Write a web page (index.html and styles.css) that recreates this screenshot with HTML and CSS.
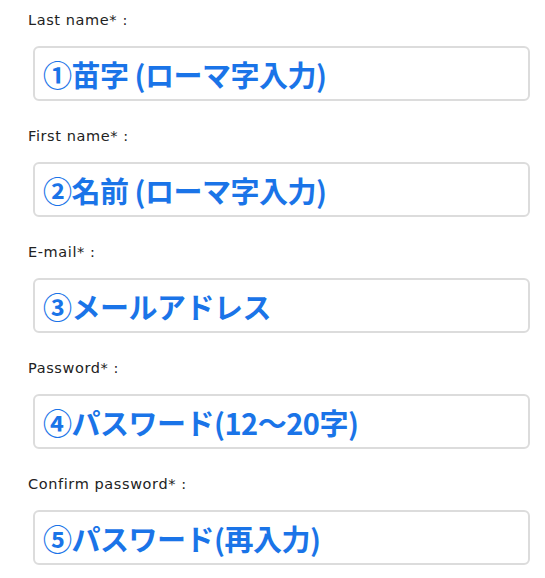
FILE: index.html
```html
<!doctype html>
<html>
	<head>
		<meta charset="utf-8" />
		<title>Register</title>
		<link rel="stylesheet" href="styles.css">
	</head>
	<body>
		<form class="signup">
			<div class="row">
				<label class="lbl">Last name* :</label>
				<div class="field">①苗字 (ローマ字入力)</div>
			</div>
			<div class="row">
				<label class="lbl">First name* :</label>
				<div class="field">②名前 (ローマ字入力)</div>
			</div>
			<div class="row">
				<label class="lbl">E-mail* :</label>
				<div class="field">③メールアドレス</div>
			</div>
			<div class="row">
				<label class="lbl">Password* :</label>
				<div class="field">④パスワード(12〜20字)</div>
			</div>
			<div class="row">
				<label class="lbl">Confirm password* :</label>
				<div class="field">⑤パスワード(再入力)</div>
			</div>
		</form>
	</body>
</html>
```
FILE: styles.css
```css
body {
	margin: 0;
	background-color: #fff;
	font-family: "DejaVu Sans", "Open Sans", sans-serif;
}
form.signup {
	padding: 10px 15px 0 28px;
}
div.row {
	margin-bottom: 25px;
}
label.lbl {
	display: block;
	font-size: 14.5px;
	line-height: 20px;
	color: #222;
	letter-spacing: 0.6px;
	margin-bottom: 16px;
}
div.field {
	margin-left: 5px;
	height: 51px;
	border: 2px solid #dcdcdc;
	border-radius: 6px;
	padding: 0 8px;
	display: flex;
	align-items: center;
	font-family: "Noto Sans CJK JP", sans-serif;
	font-weight: bold;
	font-size: 29px;
	color: #1a74e8;
	letter-spacing: -0.5px;
}
```
